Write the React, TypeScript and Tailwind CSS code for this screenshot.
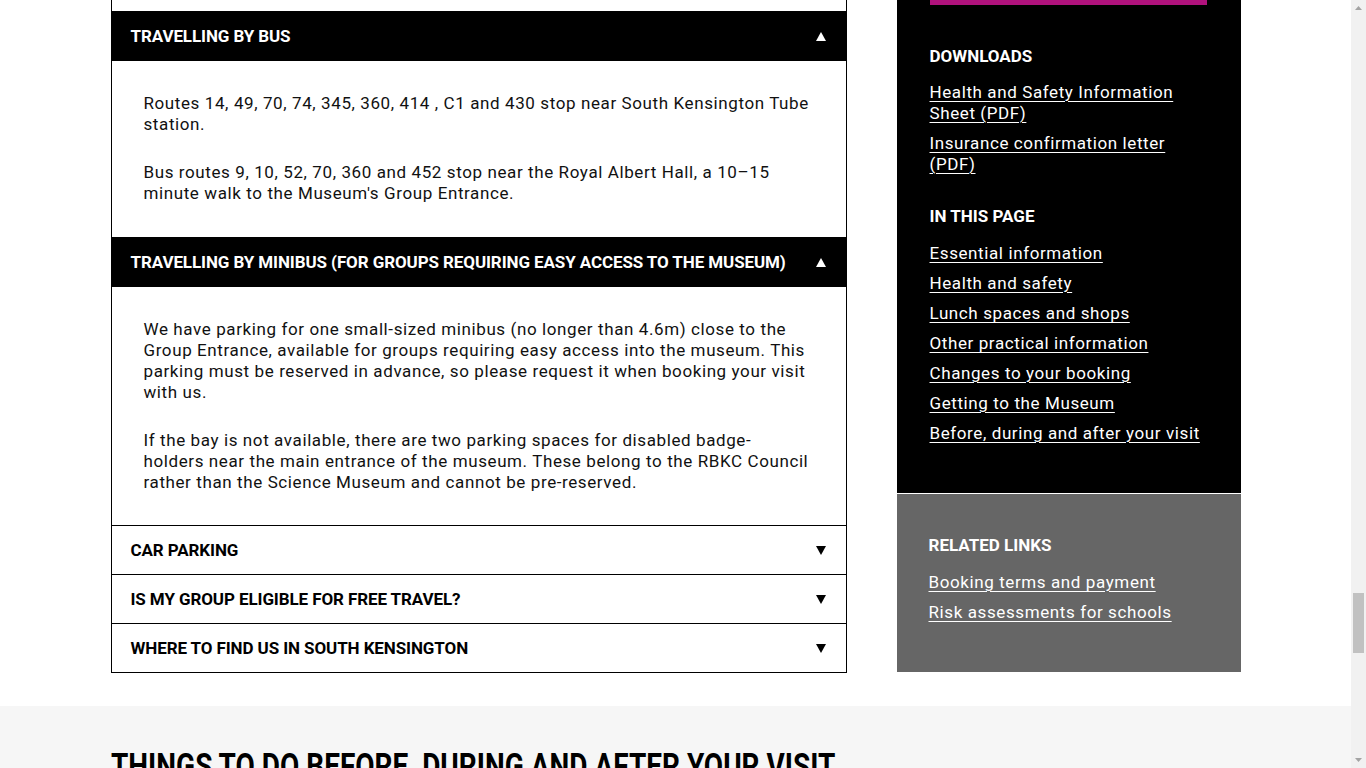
import React from "react";

const Up = ({ color }: { color: string }) => (
  <svg width="10" height="9" viewBox="0 0 10 9" className="shrink-0">
    <polygon points="5,0 10,9 0,9" fill={color} />
  </svg>
);
const Down = ({ color }: { color: string }) => (
  <svg width="10" height="9" viewBox="0 0 10 9" className="shrink-0">
    <polygon points="0,0 10,0 5,9" fill={color} />
  </svg>
);

const OpenHeader = ({ title }: { title: string }) => (
  <div className="flex h-[50px] items-center justify-between bg-black pl-[20px] pr-[21px] text-white">
    <span className="pt-[2px] font-['Roboto'] text-[17px] font-bold tracking-[-0.1px]">{title}</span>
    <Up color="#fff" />
  </div>
);

const Closed = ({ title }: { title: string }) => (
  <div className="flex h-[49px] items-center justify-between border-x border-b border-black pl-[19px] pr-[20px] text-black">
    <span className="pt-[2px] font-['Roboto'] text-[17px] font-bold tracking-[-0.1px]">{title}</span>
    <Down color="#000" />
  </div>
);

const Body = ({ children, last }: { children: React.ReactNode; last?: boolean }) => (
  <div
    className={
      last
        ? "flex flex-col gap-[27px] border-x border-black pb-[32px] pl-[32px] pr-[36px] pt-[32px] font-['Roboto'] text-[17px] leading-[21px] tracking-[0.6px] text-[#111]"
        : "flex flex-col gap-[27px] border-x border-black pb-[33px] pl-[32px] pr-[36px] pt-[32px] font-['Roboto'] text-[17px] leading-[21px] tracking-[0.6px] text-[#111]"
    }
  >
    {children}
  </div>
);

const SideLink = ({ children }: { children: React.ReactNode }) => (
  <a className="font-['Roboto'] text-[17px] leading-[21px] tracking-[0.6px] text-white underline decoration-1 underline-offset-[3px]">
    {children}
  </a>
);

export default function App() {
  return (
    <div className="flex h-[768px] w-[1366px] overflow-hidden bg-white">
      <div className="flex w-[1351px] flex-col">
        <div className="mx-auto flex w-[1130px] gap-[50px]">
          <div className="flex w-[736px] flex-col">
            <div className="h-[11px] border-x border-black" />
            <OpenHeader title="TRAVELLING BY BUS" />
            <Body>
              <p>Routes 14, 49, 70, 74, 345, 360, 414 , C1 and 430 stop near South Kensington Tube station.</p>
              <p>Bus routes 9, 10, 52, 70, 360 and 452 stop near the Royal Albert Hall, a 10–15 minute walk to the Museum's Group Entrance.</p>
            </Body>
            <OpenHeader title="TRAVELLING BY MINIBUS (FOR GROUPS REQUIRING EASY ACCESS TO THE MUSEUM)" />
            <Body last>
              <p>We have parking for one small-sized minibus (no longer than 4.6m) close to the Group Entrance, available for groups requiring easy access into the museum. This parking must be reserved in advance, so please request it when booking your visit with us.</p>
              <p>If the bay is not available, there are two parking spaces for disabled badge-holders near the main entrance of the museum. These belong to the RBKC Council rather than the Science Museum and cannot be pre-reserved.</p>
            </Body>
            <div className="border-t border-black" />
            <Closed title="CAR PARKING" />
            <Closed title="IS MY GROUP ELIGIBLE FOR FREE TRAVEL?" />
            <Closed title="WHERE TO FIND US IN SOUTH KENSINGTON" />
          </div>
          <div className="flex w-[344px] flex-col">
            <div className="flex flex-col bg-black pb-[49px] pl-[33px] pr-[30px] text-white">
              <div className="h-[5px] w-[277px] bg-[#b0127c]" />
              <h3 className="mt-[40px] font-['Roboto'] text-[17px] font-bold leading-[22px]">DOWNLOADS</h3>
              <div className="mt-[15px] flex flex-col gap-[9px]">
                <SideLink>Health and Safety Information Sheet (PDF)</SideLink>
                <SideLink>Insurance confirmation letter (PDF)</SideLink>
              </div>
              <h3 className="mt-[30px] font-['Roboto'] text-[17px] font-bold leading-[22px]">IN THIS PAGE</h3>
              <div className="mt-[16px] flex flex-col gap-[9px]">
                <SideLink>Essential information</SideLink>
                <SideLink>Health and safety</SideLink>
                <SideLink>Lunch spaces and shops</SideLink>
                <SideLink>Other practical information</SideLink>
                <SideLink>Changes to your booking</SideLink>
                <SideLink>Getting to the Museum</SideLink>
                <SideLink>Before, during and after your visit</SideLink>
              </div>
            </div>
            <div className="h-px bg-white" />
            <div className="flex h-[178px] flex-col bg-[#666666] px-[32px] pt-[40px] text-white">
              <h3 className="font-['Roboto'] text-[17px] font-bold leading-[22px]">RELATED LINKS</h3>
              <div className="mt-[16px] flex flex-col gap-[9px]">
                <SideLink>Booking terms and payment</SideLink>
                <SideLink>Risk assessments for schools</SideLink>
              </div>
            </div>
          </div>
        </div>
        <div className="mt-[33px] flex-1 bg-[#f6f6f6]">
          <div className="mx-auto w-[1130px] pt-[41px]">
            <h2 className="origin-left scale-x-[0.8] whitespace-nowrap font-['Roboto'] text-[35px] font-bold leading-[40px] text-black">
              THINGS TO DO BEFORE, DURING AND AFTER YOUR VISIT
            </h2>
          </div>
        </div>
      </div>
      <div className="relative h-[768px] w-[15px] bg-[#f1f1f1]">
        <div className="absolute left-[4px] top-[6px]">
          <svg width="7" height="4" viewBox="0 0 7 4"><polygon points="3.5,0 7,4 0,4" fill="#a3a3a3" /></svg>
        </div>
        <div className="absolute left-[2px] top-[593px] h-[60px] w-[11px] bg-[#c1c1c1]" />
        <div className="absolute bottom-[6px] left-[4px]">
          <svg width="7" height="4" viewBox="0 0 7 4"><polygon points="0,0 7,0 3.5,4" fill="#a3a3a3" /></svg>
        </div>
      </div>
    </div>
  );
}
